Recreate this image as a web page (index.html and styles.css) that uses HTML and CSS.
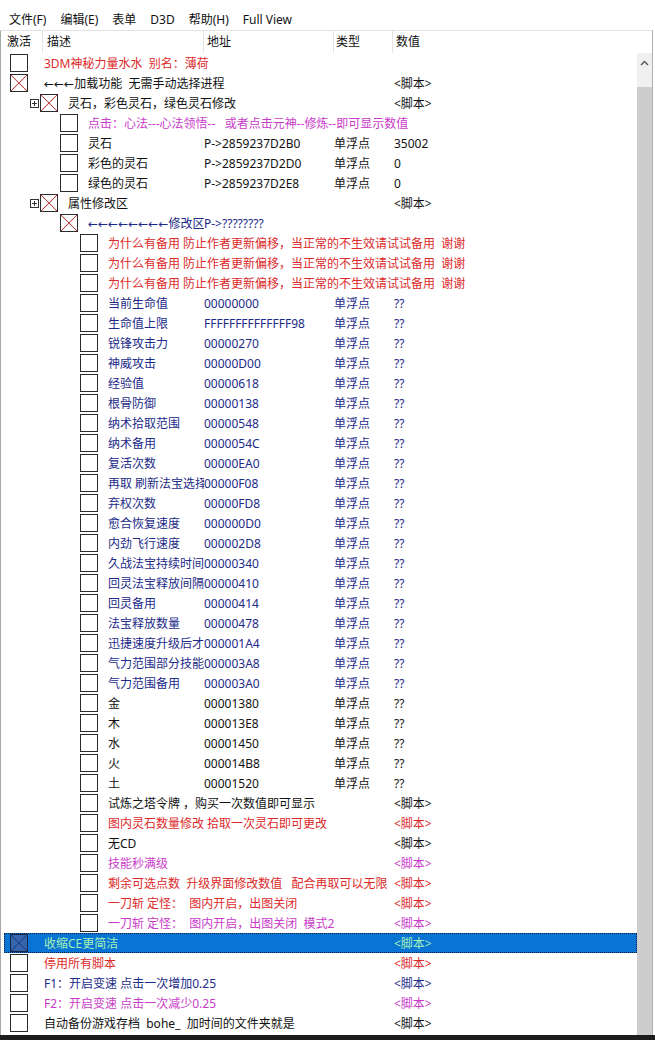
FILE: index.html
```html
<!DOCTYPE html>
<html lang="zh-CN">
<head>
   <meta charset="UTF-8">
   <meta name="viewport" content="width=device-width, initial-scale=1.0">
   <title>Cheat Table</title>
   <link rel="stylesheet" href="styles.css">
</head>
<body>
   <div class="titlebar"></div>
   <div class="menubar">
      <span>文件(F)</span>
      <span>编辑(E)</span>
      <span>表单</span>
      <span>D3D</span>
      <span>帮助(H)</span>
      <span>Full View</span>
   </div>
   <div class="list">
      <div class="header">
         <div>激活</div>
         <div>描述</div>
         <div>地址</div>
         <div>类型</div>
         <div>数值</div>
      </div>
      <div class="list-body">
         <div class="rows">
            <div class="row lv0 red"><div class="desc full"><span class="box"></span><span class="txt">3DM神秘力量水水  别名：薄荷</span></div></div>
            <div class="row lv0"><div class="desc wide"><span class="box on"></span><span class="txt"><span class="arr">←←←</span>加载功能  无需手动选择进程</span></div><div class="val">&lt;脚本&gt;</div></div>
            <div class="row lv1"><div class="desc wide"><span class="exp"></span><span class="box on"></span><span class="txt">灵石，彩色灵石，绿色灵石修改</span></div><div class="val">&lt;脚本&gt;</div></div>
            <div class="row lv2 pink"><div class="desc full"><span class="box"></span><span class="txt">点击：心法---心法领悟--   或者点击元神--修炼--即可显示数值</span></div></div>
            <div class="row lv2"><div class="desc"><span class="box"></span><span class="txt">灵石</span></div><div class="addr">P-&gt;2859237D2B0</div><div class="type">单浮点</div><div class="val">35002</div></div>
            <div class="row lv2"><div class="desc"><span class="box"></span><span class="txt">彩色的灵石</span></div><div class="addr">P-&gt;2859237D2D0</div><div class="type">单浮点</div><div class="val">0</div></div>
            <div class="row lv2"><div class="desc"><span class="box"></span><span class="txt">绿色的灵石</span></div><div class="addr">P-&gt;2859237D2E8</div><div class="type">单浮点</div><div class="val">0</div></div>
            <div class="row lv1"><div class="desc wide"><span class="exp"></span><span class="box on"></span><span class="txt">属性修改区</span></div><div class="val">&lt;脚本&gt;</div></div>
            <div class="row lv2 navy"><div class="desc"><span class="box on"></span><span class="txt"><span class="arr">←←←←←←←←</span>修改区</span></div><div class="addr">P-&gt;????????</div></div>
            <div class="row lv3 red"><div class="desc full"><span class="box"></span><span class="txt">为什么有备用 防止作者更新偏移，当正常的不生效请试试备用  谢谢</span></div></div>
            <div class="row lv3 red"><div class="desc full"><span class="box"></span><span class="txt">为什么有备用 防止作者更新偏移，当正常的不生效请试试备用  谢谢</span></div></div>
            <div class="row lv3 red"><div class="desc full"><span class="box"></span><span class="txt">为什么有备用 防止作者更新偏移，当正常的不生效请试试备用  谢谢</span></div></div>
            <div class="row lv3 navy"><div class="desc"><span class="box"></span><span class="txt">当前生命值</span></div><div class="addr">00000000</div><div class="type">单浮点</div><div class="val">??</div></div>
            <div class="row lv3 navy"><div class="desc"><span class="box"></span><span class="txt">生命值上限</span></div><div class="addr">FFFFFFFFFFFFFF98</div><div class="type">单浮点</div><div class="val">??</div></div>
            <div class="row lv3 navy"><div class="desc"><span class="box"></span><span class="txt">锐锋攻击力</span></div><div class="addr">00000270</div><div class="type">单浮点</div><div class="val">??</div></div>
            <div class="row lv3 navy"><div class="desc"><span class="box"></span><span class="txt">神威攻击</span></div><div class="addr">00000D00</div><div class="type">单浮点</div><div class="val">??</div></div>
            <div class="row lv3 navy"><div class="desc"><span class="box"></span><span class="txt">经验值</span></div><div class="addr">00000618</div><div class="type">单浮点</div><div class="val">??</div></div>
            <div class="row lv3 navy"><div class="desc"><span class="box"></span><span class="txt">根骨防御</span></div><div class="addr">00000138</div><div class="type">单浮点</div><div class="val">??</div></div>
            <div class="row lv3 navy"><div class="desc"><span class="box"></span><span class="txt">纳术拾取范围</span></div><div class="addr">00000548</div><div class="type">单浮点</div><div class="val">??</div></div>
            <div class="row lv3 navy"><div class="desc"><span class="box"></span><span class="txt">纳术备用</span></div><div class="addr">0000054C</div><div class="type">单浮点</div><div class="val">??</div></div>
            <div class="row lv3 navy"><div class="desc"><span class="box"></span><span class="txt">复活次数</span></div><div class="addr">00000EA0</div><div class="type">单浮点</div><div class="val">??</div></div>
            <div class="row lv3 navy"><div class="desc"><span class="box"></span><span class="txt">再取 刷新法宝选择</span></div><div class="addr">00000F08</div><div class="type">单浮点</div><div class="val">??</div></div>
            <div class="row lv3 navy"><div class="desc"><span class="box"></span><span class="txt">弃权次数</span></div><div class="addr">00000FD8</div><div class="type">单浮点</div><div class="val">??</div></div>
            <div class="row lv3 navy"><div class="desc"><span class="box"></span><span class="txt">愈合恢复速度</span></div><div class="addr">000000D0</div><div class="type">单浮点</div><div class="val">??</div></div>
            <div class="row lv3 navy"><div class="desc"><span class="box"></span><span class="txt">内劲飞行速度</span></div><div class="addr">000002D8</div><div class="type">单浮点</div><div class="val">??</div></div>
            <div class="row lv3 navy"><div class="desc"><span class="box"></span><span class="txt">久战法宝持续时间</span></div><div class="addr">00000340</div><div class="type">单浮点</div><div class="val">??</div></div>
            <div class="row lv3 navy"><div class="desc"><span class="box"></span><span class="txt">回灵法宝释放间隔</span></div><div class="addr">00000410</div><div class="type">单浮点</div><div class="val">??</div></div>
            <div class="row lv3 navy"><div class="desc"><span class="box"></span><span class="txt">回灵备用</span></div><div class="addr">00000414</div><div class="type">单浮点</div><div class="val">??</div></div>
            <div class="row lv3 navy"><div class="desc"><span class="box"></span><span class="txt">法宝释放数量</span></div><div class="addr">00000478</div><div class="type">单浮点</div><div class="val">??</div></div>
            <div class="row lv3 navy"><div class="desc"><span class="box"></span><span class="txt">迅捷速度升级后才</span></div><div class="addr">000001A4</div><div class="type">单浮点</div><div class="val">??</div></div>
            <div class="row lv3 navy"><div class="desc"><span class="box"></span><span class="txt">气力范围部分技能</span></div><div class="addr">000003A8</div><div class="type">单浮点</div><div class="val">??</div></div>
            <div class="row lv3 navy"><div class="desc"><span class="box"></span><span class="txt">气力范围备用</span></div><div class="addr">000003A0</div><div class="type">单浮点</div><div class="val">??</div></div>
            <div class="row lv3"><div class="desc"><span class="box"></span><span class="txt">金</span></div><div class="addr">00001380</div><div class="type">单浮点</div><div class="val">??</div></div>
            <div class="row lv3"><div class="desc"><span class="box"></span><span class="txt">木</span></div><div class="addr">000013E8</div><div class="type">单浮点</div><div class="val">??</div></div>
            <div class="row lv3"><div class="desc"><span class="box"></span><span class="txt">水</span></div><div class="addr">00001450</div><div class="type">单浮点</div><div class="val">??</div></div>
            <div class="row lv3"><div class="desc"><span class="box"></span><span class="txt">火</span></div><div class="addr">000014B8</div><div class="type">单浮点</div><div class="val">??</div></div>
            <div class="row lv3"><div class="desc"><span class="box"></span><span class="txt">土</span></div><div class="addr">00001520</div><div class="type">单浮点</div><div class="val">??</div></div>
            <div class="row lv3"><div class="desc wide"><span class="box"></span><span class="txt">试炼之塔令牌 ，购买一次数值即可显示</span></div><div class="val">&lt;脚本&gt;</div></div>
            <div class="row lv3 red"><div class="desc wide"><span class="box"></span><span class="txt">图内灵石数量修改 拾取一次灵石即可更改</span></div><div class="val">&lt;脚本&gt;</div></div>
            <div class="row lv3"><div class="desc wide"><span class="box"></span><span class="txt">无CD</span></div><div class="val">&lt;脚本&gt;</div></div>
            <div class="row lv3 pink"><div class="desc wide"><span class="box"></span><span class="txt">技能秒满级</span></div><div class="val">&lt;脚本&gt;</div></div>
            <div class="row lv3 red"><div class="desc wide"><span class="box"></span><span class="txt">剩余可选点数  升级界面修改数值   配合再取可以无限</span></div><div class="val">&lt;脚本&gt;</div></div>
            <div class="row lv3 red"><div class="desc wide"><span class="box"></span><span class="txt">一刀斩 定怪：  图内开启，出图关闭</span></div><div class="val">&lt;脚本&gt;</div></div>
            <div class="row lv3 pink"><div class="desc wide"><span class="box"></span><span class="txt">一刀斩 定怪：  图内开启，出图关闭  模式2</span></div><div class="val">&lt;脚本&gt;</div></div>
            <div class="row lv0 sel"><div class="desc wide"><span class="box on"></span><span class="txt">收缩CE更简洁</span></div><div class="val">&lt;脚本&gt;</div></div>
            <div class="row lv0 red"><div class="desc wide"><span class="box"></span><span class="txt">停用所有脚本</span></div><div class="val">&lt;脚本&gt;</div></div>
            <div class="row lv0 navy"><div class="desc wide"><span class="box"></span><span class="txt">F1：开启变速 点击一次增加0.25</span></div><div class="val">&lt;脚本&gt;</div></div>
            <div class="row lv0 pink"><div class="desc wide"><span class="box"></span><span class="txt">F2：开启变速 点击一次减少0.25</span></div><div class="val">&lt;脚本&gt;</div></div>
            <div class="row lv0"><div class="desc wide"><span class="box"></span><span class="txt">自动备份游戏存档  bohe_  加时间的文件夹就是</span></div><div class="val">&lt;脚本&gt;</div></div>
         </div>
         <div class="scroll">
            <div class="scroll-up">
               <svg width="9" height="6" viewBox="0 0 9 6"><path d="M1 5 L4.5 1.5 L8 5" fill="none" stroke="#555" stroke-width="1.4"/></svg>
            </div>
            <div class="scroll-thumb"></div>
         </div>
      </div>
   </div>
   <div class="bottom"></div>
</body>
</html>
```

FILE: styles.css
```css
*{
   margin: 0;
   padding: 0;
   box-sizing: border-box;
}
body{
   width: 655px;
   height: 1040px;
   overflow: hidden;
   background: #fff;
   color: #111;
   font-family: "Noto Sans", "Noto Sans CJK SC", sans-serif;
   font-size: 12px;
}
.titlebar{
   height: 8px;
}
.menubar{
   height: 22px;
   display: flex;
   align-items: center;
   padding-left: 2px;
}
.menubar span{
   padding: 0 7px;
}
.list{
   height: 1005px;
   margin-right: 2px;
   border-top: 1px solid #e3e3e3;
   border-left: 1px solid #a8a8a8;
   border-right: 1px solid #b0b0b0;
   display: flex;
   flex-direction: column;
}
.header{
   height: 22px;
   flex: none;
   display: grid;
   grid-template-columns: 41px 161px 130px 59px 1fr;
   line-height: 22px;
}
.header div{
   border-left: 1px solid #e5e5e5;
   padding-left: 3px;
}
.header div:first-child{
   border-left: 0;
   padding-left: 6px;
}
.header div:nth-child(2){
   padding-left: 4px;
}
.header div:nth-child(4){
   padding-left: 2px;
}
.list-body{
   flex: 1;
   display: flex;
}
.rows{
   flex: 1;
}
.scroll{
   width: 15px;
   display: flex;
   flex-direction: column;
}
.scroll-up{
   height: 34px;
   background: #f0f0f0;
   display: flex;
   justify-content: center;
   padding-top: 7px;
}
.scroll-thumb{
   flex: 1;
   background: #cdcdcd;
}
.bottom{
   height: 5px;
   background: #1d1d1d;
}

/* rows */
.row{
   height: 20px;
   display: grid;
   grid-template-columns: 203px 130px 60px 1fr;
   align-items: center;
   white-space: nowrap;
}
.desc{
   display: flex;
   align-items: center;
   height: 20px;
   overflow: hidden;
}
.desc.wide{
   grid-column: 1 / 4;
}
.desc.full{
   grid-column: 1 / -1;
}
.txt{
   white-space: pre;
   margin-left: 10px;
}
.arr{
   font-family: "DejaVu Sans", sans-serif;
}
.lv0 .desc{ padding-left: 9px; }
.lv0 .txt{ margin-left: 16px; }
.lv1 .desc{ padding-left: 29px; }
.lv2 .desc{ padding-left: 59px; }
.lv3 .desc{ padding-left: 79px; }

.box{
   flex: none;
   width: 18px;
   height: 18px;
   border: 1px solid #2a2a2a;
   background: #fff;
}
.box.on{
   background:
      linear-gradient(to top right, transparent calc(50% - 0.8px), #b94545 50%, transparent calc(50% + 0.8px)),
      linear-gradient(to bottom right, transparent calc(50% - 0.8px), #b94545 50%, transparent calc(50% + 0.8px)),
      #fff;
}
.exp{
   flex: none;
   width: 9px;
   height: 9px;
   margin-right: 1px;
   border: 1px solid #333;
   background:
      linear-gradient(#333, #333) center / 5px 1px no-repeat,
      linear-gradient(#333, #333) center / 1px 5px no-repeat;
}

/* colours */
.red{ color: #dc2a2a; }
.pink{ color: #c93cc9; }
.navy{ color: #1c2a88; }

.row.sel{
   position: relative;
   color: #a4f2b6;
   background: linear-gradient(to right, transparent 3px, #0a74d4 3px);
}
.row.sel::after{
   content: '';
   position: absolute;
   top: 0;
   bottom: 0;
   left: 3px;
   right: 0;
   border: 1px dotted #10203a;
}
.row.sel .box{
   border-color: #16284a;
   background:
      linear-gradient(to top right, transparent calc(50% - 0.8px), #1d3f80 50%, transparent calc(50% + 0.8px)),
      linear-gradient(to bottom right, transparent calc(50% - 0.8px), #1d3f80 50%, transparent calc(50% + 0.8px)),
      #3565ad;
}
```
